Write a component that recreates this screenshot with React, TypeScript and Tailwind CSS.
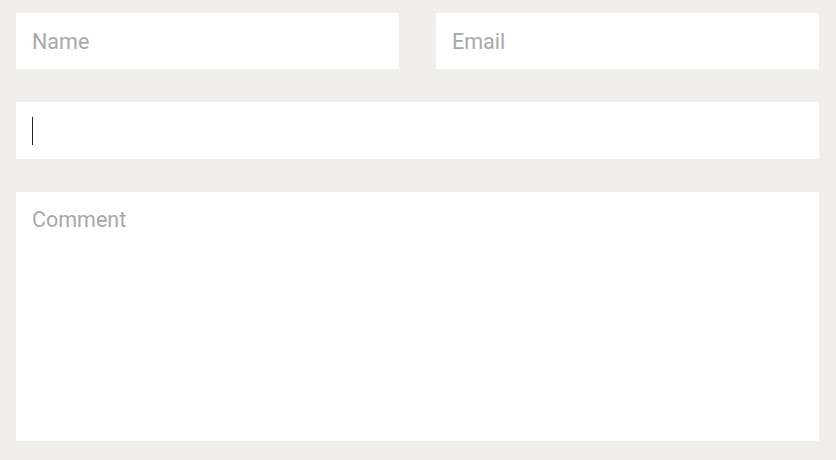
import React from 'react';

const field =
  "w-full bg-white px-4 text-[21.5px] text-[#555] placeholder:text-[#a8a8a8] outline-none font-['Roboto',sans-serif]";

export default function App() {
  return (
    <div className="min-h-[460px] w-[836px] bg-[#f0efeb] pl-4 pr-[17px] pt-[13px] pb-[19px] font-['Roboto',sans-serif]">
      <div className="grid grid-cols-2 gap-x-[37px]">
        <input className={`${field} h-[56px]`} placeholder="Name" />
        <input className={`${field} h-[56px]`} placeholder="Email" />
      </div>
      <div className="relative mt-[33px]">
        <input className={`${field} h-[57px]`} />
        <span className="absolute left-4 top-[15px] h-[28px] w-px bg-[#222]" />
      </div>
      <textarea
        className={`${field} mt-[33px] block h-[249px] resize-none pt-[12px]`}
        placeholder="Comment"
      />
    </div>
  );
}
